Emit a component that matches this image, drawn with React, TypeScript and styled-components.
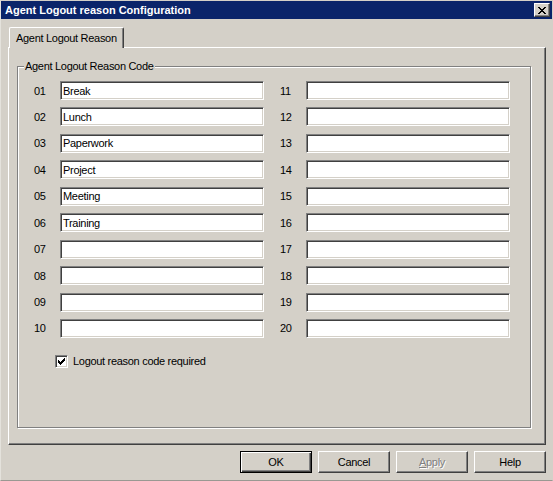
import React from 'react'
import styled, { createGlobalStyle } from 'styled-components'

const GlobalStyle = createGlobalStyle`
  html, body {
    margin: 0;
    padding: 0;
    background: #d4d0c8;
  }
  body {
    font-family: "Liberation Sans", Arial, sans-serif;
    font-size: 11px;
    letter-spacing: -0.3px;
    color: #000;
  }
`

const reasons = ['Break', 'Lunch', 'Paperwork', 'Project', 'Meeting', 'Training', '', '', '', '', '', '', '', '', '', '', '', '', '', '']

const CHECK = [
  '......#',
  '.....##',
  '#...###',
  '##.###.',
  '#####..',
  '.###...',
  '..#....'
]

const Window = styled.div`
  width: 553px;
  height: 481px;
  box-sizing: border-box;
  display: flex;
  flex-direction: column;
  background: #d4d0c8;
  border-top: 1px solid #d4d0c8;
  border-left: 1px solid #e4e2dc;
  border-right: 1px solid #d4d0c8;
  border-bottom: 1px solid #9a9892;
`

const TitleBar = styled.div`
  height: 18px;
  flex: none;
  display: flex;
  align-items: center;
  justify-content: space-between;
  padding: 0 2px 0 4px;
  background: #0a246a;
  color: #fff;
  font-weight: bold;
  font-size: 11px;
  letter-spacing: 0;
`

const CloseButton = styled.button`
  width: 16px;
  height: 14px;
  padding: 0;
  box-sizing: border-box;
  display: flex;
  align-items: center;
  justify-content: center;
  background: #d4d0c8;
  border: 1px solid;
  border-color: #fff #404040 #404040 #fff;
  box-shadow: inset -1px -1px 0 #808080;
`

const Body = styled.div`
  flex: 1;
  display: flex;
  flex-direction: column;
  padding: 8px 6px 7px 7px;
`

const TabStrip = styled.div`
  height: 20px;
  flex: none;
  display: flex;
  padding-left: 1px;
`

const Tab = styled.div`
  position: relative;
  z-index: 1;
  width: 115px;
  height: 21px;
  box-sizing: border-box;
  padding: 4px 6px 0;
  white-space: nowrap;
  background: #d4d0c8;
  border-top: 1px solid #fff;
  border-left: 1px solid #fff;
  border-right: 1px solid #404040;
  border-radius: 2px 2px 0 0;
  box-shadow: inset -1px 0 0 #808080;
`

const Panel = styled.div`
  flex: 1;
  display: flex;
  flex-direction: column;
  box-sizing: border-box;
  padding: 12px 14px 16px 8px;
  border: 1px solid;
  border-color: #fff #404040 #404040 #fff;
  box-shadow: inset -1px -1px 0 #808080;
`

const Group = styled.fieldset`
  flex: 1;
  margin: 0;
  padding: 8px 0 0 6px;
  min-width: 0;
  border: 1px solid #808080;
  box-shadow: inset 1px 1px 0 #fff, 1px 1px 0 #fff;
`

const Caption = styled.legend`
  padding: 0 1px;
  margin: 0;
  line-height: 13px;
  background: #d4d0c8;
`

const Fields = styled.div`
  display: grid;
  grid-auto-flow: column;
  grid-template-columns: 230px 230px;
  grid-template-rows: repeat(10, 19px);
  column-gap: 16px;
  row-gap: 7.45px;
  margin-left: 10px;
`

const Row = styled.div`
  display: flex;
  align-items: center;
`

const Num = styled.span`
  width: 26px;
  flex: none;
`

const TextBox = styled.input`
  width: 204px;
  height: 19px;
  box-sizing: border-box;
  margin: 0;
  padding: 0 0 0 2px;
  font-family: inherit;
  font-size: 11px;
  letter-spacing: inherit;
  color: #000;
  background: #fff;
  border: 1px solid;
  border-color: #808080 #fff #fff #808080;
  box-shadow: inset 1px 1px 0 #404040, inset -1px -1px 0 #d4d0c8;
  outline: none;
`

const CheckRow = styled.label`
  display: flex;
  align-items: center;
  gap: 5px;
  margin: 17px 0 0 31px;
`

const CheckBox = styled.span`
  width: 13px;
  height: 13px;
  box-sizing: border-box;
  display: flex;
  align-items: center;
  justify-content: center;
  background: #fff;
  border: 1px solid;
  border-color: #808080 #fff #fff #808080;
  box-shadow: inset 1px 1px 0 #404040, inset -1px -1px 0 #d4d0c8;
`

const ButtonRow = styled.div`
  display: flex;
  justify-content: flex-end;
  gap: 6px;
  margin-top: 6px;
`

const Button = styled.button<{ $default?: boolean }>`
  width: 72px;
  height: 22px;
  box-sizing: border-box;
  padding: 0;
  font-family: inherit;
  font-size: 11px;
  letter-spacing: inherit;
  color: #000;
  background: #d4d0c8;
  border: 1px solid;
  border-color: #fff #404040 #404040 #fff;
  box-shadow: inset -1px -1px 0 #808080;
  ${({ $default }) => $default && `
    border: 1px solid #000;
    box-shadow: inset 1px 1px 0 #fff, inset -1px -1px 0 #404040, inset -2px -2px 0 #808080;
  `}
  &:disabled {
    color: #808080;
    text-shadow: 1px 1px 0 #fff;
  }
`

const CloseGlyph = () => (
  <svg width="8" height="7" viewBox="0 0 8 7" shapeRendering="crispEdges">
    {Array.from({ length: 7 }).map((_, i) => (
      <g key={i} fill="#000">
        <rect x={i} y={i} width={2} height={1} />
        <rect x={6 - i} y={i} width={2} height={1} />
      </g>
    ))}
  </svg>
)

const CheckGlyph = () => (
  <svg width="7" height="7" viewBox="0 0 7 7" shapeRendering="crispEdges">
    {CHECK.map((line, y) =>
      line.split('').map((c, x) =>
        c === '#' ? <rect key={`${x}_${y}`} x={x} y={y} width={1} height={1} fill="#000" /> : null
      )
    )}
  </svg>
)

export default function App() {
  return (
    <>
      <GlobalStyle />
      <Window>
        <TitleBar>
          <span>Agent Logout reason Configuration</span>
          <CloseButton aria-label="Close">
            <CloseGlyph />
          </CloseButton>
        </TitleBar>
        <Body>
          <TabStrip>
            <Tab>Agent Logout Reason</Tab>
          </TabStrip>
          <Panel>
            <Group>
              <Caption>Agent Logout Reason Code</Caption>
              <Fields>
                {reasons.map((reason, i) => {
                  const num = String(i + 1).padStart(2, '0')
                  return (
                    <Row key={num}>
                      <Num>{num}</Num>
                      <TextBox defaultValue={reason} />
                    </Row>
                  )
                })}
              </Fields>
              <CheckRow>
                <CheckBox>
                  <CheckGlyph />
                </CheckBox>
                Logout reason code required
              </CheckRow>
            </Group>
          </Panel>
          <ButtonRow>
            <Button $default>OK</Button>
            <Button>Cancel</Button>
            <Button disabled><u>A</u>pply</Button>
            <Button>Help</Button>
          </ButtonRow>
        </Body>
      </Window>
    </>
  )
}
